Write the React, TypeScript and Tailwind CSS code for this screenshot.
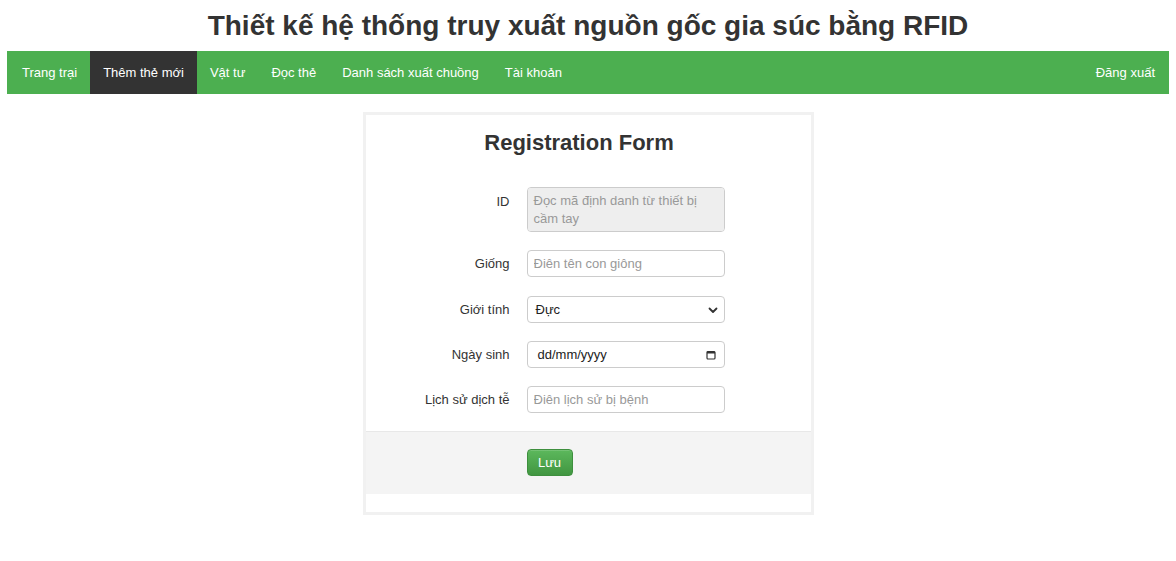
const navItems = ['Trang trại', 'Thêm thẻ mới', 'Vật tư', 'Đọc thẻ', 'Danh sách xuất chuồng', 'Tài khoản'];

function Row({ label, children, top, className = '' }: { label: string; children: React.ReactNode; top?: boolean; className?: string }) {
  return (
    <div className={`flex ${top ? 'items-start' : 'items-center'} ${className}`}>
      <label className={`w-[144px] shrink-0 text-right text-[13px] text-[#333] ${top ? 'pt-[5px]' : ''}`}>{label}</label>
      <div className="ml-[17px] w-[198px]">{children}</div>
    </div>
  );
}

export default function App() {
  return (
    <div className="min-h-[561px] bg-white text-[#333]" style={{ fontFamily: "'Liberation Sans', Arial, sans-serif" }}>
      {/* Header */}
      <h1 className="pt-[10px] text-center text-[28px] font-bold leading-[32px] text-[#333]">
        Thiết kế hệ thống truy xuất nguồn gốc gia súc bằng RFID
      </h1>

      {/* Nav bar */}
      <nav className="mx-[7px] mt-[9px] flex h-[43px] bg-[#4caf50] text-[13px] text-white">
        {navItems.map((item) => (
          <a
            key={item}
            href="#"
            className={`flex items-center px-[13px] first:pl-[15px] ${item === 'Thêm thẻ mới' ? 'bg-[#333]' : ''}`}
          >
            {item}
          </a>
        ))}
        <a href="#" className="ml-auto flex items-center px-[14px]">
          Đăng xuất
        </a>
      </nav>

      {/* Registration card */}
      <div className="mx-auto mt-[18px] w-[451px] border-[3px] border-[#f1f1f1] bg-white">
        <h2 className="pt-[15px] pr-[18px] text-center text-[22px] font-bold leading-[26px] text-[#333]">Registration Form</h2>

        <div className="mt-[31px] flex flex-col gap-[18px] pb-[18px]">
          <Row label="ID" top>
            <textarea
              readOnly
              rows={2}
              placeholder="Đọc mã định danh từ thiết bị cầm tay"
              className="block h-[45px] w-full resize-none rounded-[4px] border border-[#ccc] bg-[#eee] px-[6px] py-[4px] text-[13px] leading-[18px] outline-none placeholder:text-[#999]"
            />
          </Row>
          <Row label="Giống">
            <input
              placeholder="Điên tên con giông"
              className="block h-[27px] w-full rounded-[4px] border border-[#ccc] px-[6px] text-[13px] outline-none placeholder:text-[#999]"
            />
          </Row>
          <Row label="Giới tính" className="mt-[1px]">
            <div className="flex h-[27px] w-full items-center justify-between rounded-[4px] border border-[#ccc] pl-[8px] pr-[6px] text-[13px] text-[#222]">
              <span>Đực</span>
              <svg width="10" height="10" viewBox="0 0 10 10" fill="none">
                <path d="M1.5 3.5 L5 7 L8.5 3.5" stroke="#333" strokeWidth="1.8" strokeLinecap="round" strokeLinejoin="round" />
              </svg>
            </div>
          </Row>
          <Row label="Ngày sinh">
            <div className="flex h-[27px] w-full items-center justify-between rounded-[4px] border border-[#ccc] pl-[10px] pr-[8px] text-[13px] text-[#222]">
              <span>dd/mm/yyyy</span>
              <svg width="10" height="10" viewBox="0 0 10 10" fill="none">
                <rect x="1" y="1.5" width="8" height="7.5" rx="1" stroke="#333" strokeWidth="1.2" />
                <rect x="1" y="1.5" width="8" height="2" fill="#333" />
              </svg>
            </div>
          </Row>
          <Row label="Lịch sử dịch tễ">
            <input
              placeholder="Điên lịch sử bị bệnh"
              className="block h-[27px] w-full rounded-[4px] border border-[#ccc] px-[6px] text-[13px] outline-none placeholder:text-[#999]"
            />
          </Row>
        </div>

        {/* Footer */}
        <div className="border-t border-[#e8e8e8] bg-[#f4f4f4] pt-[17px] pb-[18px] pl-[161px]">
          <button className="block h-[27px] w-[46px] rounded-[4px] border border-[#3e8f3e] bg-gradient-to-b from-[#5cb85c] to-[#419641] text-[13px] text-white shadow-[inset_0_1px_0_rgba(255,255,255,0.15)]">
            Lưu
          </button>
        </div>
        <div className="h-[18px]" />
      </div>
    </div>
  );
}
